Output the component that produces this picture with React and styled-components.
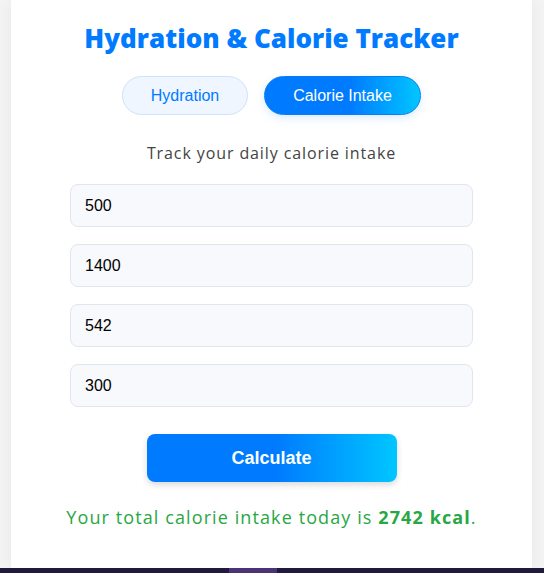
import React from "react";
import styled, { createGlobalStyle } from "styled-components";

const Global = createGlobalStyle`
  html, body { margin: 0; padding: 0; }
  body {
    background: #f4f4f5;
    font-family: "Open Sans", "Liberation Sans", sans-serif;
    overflow: hidden;
  }
`;

const Page = styled.div`
  width: 544px;
  height: 573px;
  display: flex;
  flex-direction: column;
`;

const Card = styled.main`
  width: 521px;
  height: 568px;
  margin: 0 12px 0 11px;
  background: #ffffff;
  box-shadow: 0 0 18px rgba(0, 0, 0, 0.06);
  box-sizing: border-box;
  padding-top: 22px;
  display: flex;
  flex-direction: column;
  align-items: center;
`;

const Title = styled.h1`
  margin: 0;
  font-family: "Open Sans", sans-serif;
  font-weight: 800;
  font-size: 26px;
  line-height: 32px;
  color: #007bff;
  letter-spacing: 0;
`;

const Tabs = styled.div`
  display: flex;
  gap: 16px;
  margin-top: 22px;
`;

const Tab = styled.button`
  height: 39px;
  width: ${(p) => p.$w}px;
  box-sizing: border-box;
  border-radius: 20px;
  font-family: "Liberation Sans", Arial, sans-serif;
  font-size: 16px;
  cursor: pointer;
  border: 1px solid ${(p) => (p.$active ? "#0a7cf0" : "#cfe2fb")};
  background: ${(p) =>
    p.$active ? "linear-gradient(90deg, #007bff 55%, #00c6ff 100%)" : "#f0f6ff"};
  color: ${(p) => (p.$active ? "#ffffff" : "#007bff")};
  box-shadow: ${(p) => (p.$active ? "0 3px 8px rgba(0,123,255,0.15)" : "none")};
`;

const Subtitle = styled.p`
  margin: 26px 0 0;
  font-family: "Open Sans", sans-serif;
  font-size: 16px;
  line-height: 24px;
  letter-spacing: 0.9px;
  color: #444444;
`;

const Fields = styled.div`
  display: flex;
  flex-direction: column;
  gap: 17px;
  margin-top: 19px;
`;

const Field = styled.input`
  width: 403px;
  height: 43px;
  box-sizing: border-box;
  border: 1px solid #e1e5ec;
  border-radius: 8px;
  background: #f8f9fd;
  padding: 0 14px;
  font-family: "Liberation Sans", Arial, sans-serif;
  font-size: 16px;
  color: #000000;
  outline: none;
`;

const CalcButton = styled.button`
  margin-top: 27px;
  width: 250px;
  height: 48px;
  border: none;
  border-radius: 8px;
  background: linear-gradient(90deg, #007bff 52%, #00c6ff 100%);
  color: #ffffff;
  font-family: "Liberation Sans", Arial, sans-serif;
  font-weight: 700;
  font-size: 18px;
  box-shadow: 0 3px 6px rgba(0, 0, 0, 0.15);
  cursor: pointer;
`;

const Result = styled.p`
  margin: 22px 0 0;
  font-family: "Open Sans", sans-serif;
  font-size: 18px;
  line-height: 26px;
  letter-spacing: 1.1px;
  color: #28a745;
  strong { font-weight: 700; }
`;

const Footer = styled.div`
  height: 5px;
  background: #221a3e;
  display: flex;
  padding-left: 229px;
`;

const FooterMark = styled.div`
  width: 48px;
  background: #4a3476;
`;

export default function App() {
  return (
    <Page>
      <Global />
      <Card>
        <Title>Hydration &amp; Calorie Tracker</Title>
        <Tabs>
          <Tab $w={126}>Hydration</Tab>
          <Tab $w={157} $active>Calorie Intake</Tab>
        </Tabs>
        <Subtitle>Track your daily calorie intake</Subtitle>
        <Fields>
          <Field type="number" defaultValue="500" />
          <Field type="number" defaultValue="1400" />
          <Field type="number" defaultValue="542" />
          <Field type="number" defaultValue="300" />
        </Fields>
        <CalcButton>Calculate</CalcButton>
        <Result>
          Your total calorie intake today is <strong>2742 kcal</strong>.
        </Result>
      </Card>
      <Footer>
        <FooterMark />
      </Footer>
    </Page>
  );
}
